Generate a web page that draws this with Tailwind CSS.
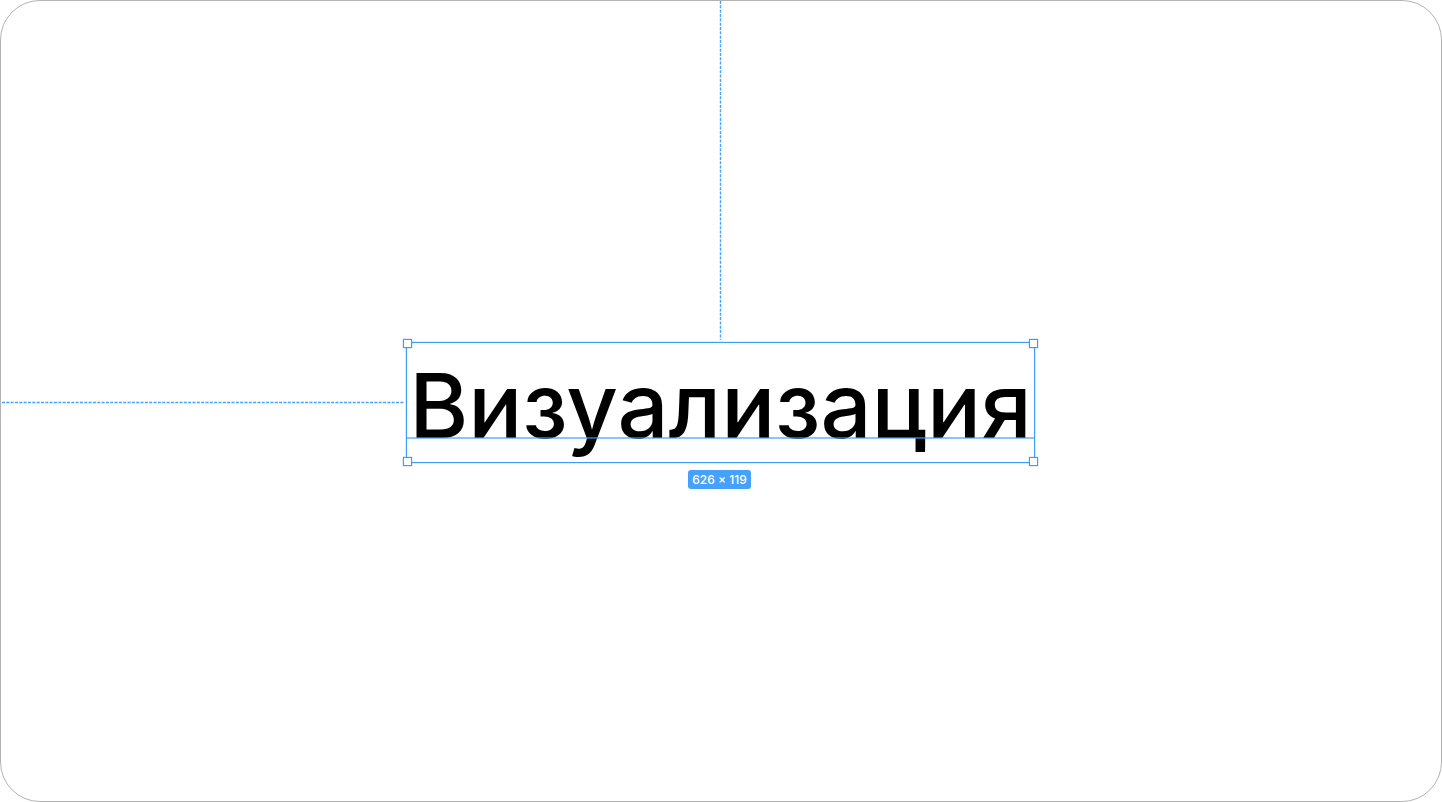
<!DOCTYPE html>
<html lang="ru">
<head>
    <meta charset="UTF-8">
    <meta name="viewport" content="width=device-width, initial-scale=1.0">
    <title>Визуализация</title>
    <script src="https://cdn.jsdelivr.net/npm/@tailwindcss/browser@4"></script>
</head>
<body class="bg-white font-['Inter',sans-serif]">
    <main class="grid min-h-screen grid-cols-[1fr_auto_1fr] grid-rows-[1fr_auto_1fr] overflow-hidden rounded-[40px] border border-[#b3b3b3] bg-white pt-[2px] pr-px">
        <!-- guides -->
        <svg class="col-start-2 row-start-1 h-full w-[3px] justify-self-center overflow-visible" aria-hidden="true">
            <line x1="1.5" y1="-2" x2="1.5" y2="99.5%" stroke="#46a3fa" stroke-width="1.4" stroke-dasharray="3 1.33" />
        </svg>
        <svg class="col-start-1 row-start-2 h-[3px] w-full self-center" aria-hidden="true">
            <line x1="1" y1="1.5" x2="99.5%" y2="1.5" stroke="#46a3fa" stroke-width="1.4" stroke-dasharray="3 1.33" />
        </svg>

        <!-- selected text layer -->
        <div class="relative col-start-2 row-start-2 border border-[#3d9cf9] px-[2px] pt-[6px] shadow-[0_0_1px_#3d9cf9]">
            <h1 class="text-[90px] leading-[113px] font-medium text-black">Визуализация</h1>
            <div class="absolute inset-x-0 bottom-[23px] h-[2px] bg-[#3d9cf9]/60"></div>
            <span class="absolute -top-1 -left-1 size-[9px] border border-[#3d9cf9] bg-white shadow-[0_0_1px_#3d9cf9]"></span>
            <span class="absolute -top-1 -right-1 size-[9px] border border-[#3d9cf9] bg-white shadow-[0_0_1px_#3d9cf9]"></span>
            <span class="absolute -bottom-1 -left-1 size-[9px] border border-[#3d9cf9] bg-white shadow-[0_0_1px_#3d9cf9]"></span>
            <span class="absolute -right-1 -bottom-1 size-[9px] border border-[#3d9cf9] bg-white shadow-[0_0_1px_#3d9cf9]"></span>
        </div>

        <div class="col-start-2 row-start-3 mt-[7px] mr-[2px] self-start justify-self-center rounded-[3px] bg-[#45a1fc] px-1 text-xs leading-[19px] font-medium text-white">626 × 119</div>
    </main>
</body>
</html>
